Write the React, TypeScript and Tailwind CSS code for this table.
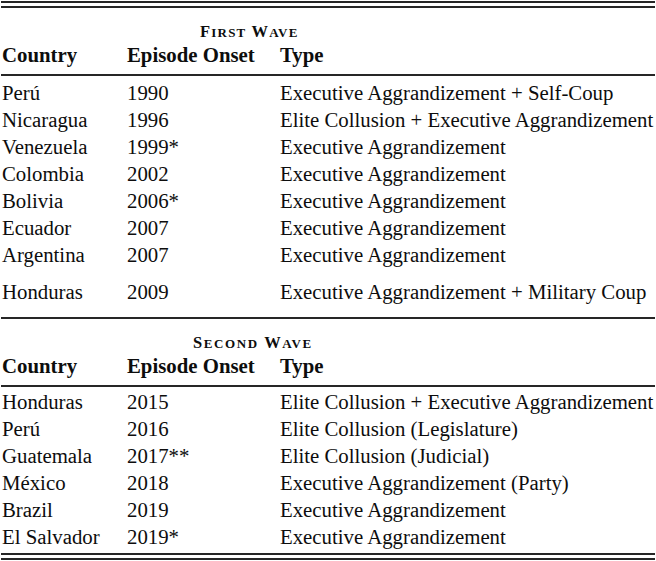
import React from "react";

type Row = [string, string, string];

const first: Row[] = [
  ["Perú", "1990", "Executive Aggrandizement + Self-Coup"],
  ["Nicaragua", "1996", "Elite Collusion + Executive Aggrandizement"],
  ["Venezuela", "1999*", "Executive Aggrandizement"],
  ["Colombia", "2002", "Executive Aggrandizement"],
  ["Bolivia", "2006*", "Executive Aggrandizement"],
  ["Ecuador", "2007", "Executive Aggrandizement"],
  ["Argentina", "2007", "Executive Aggrandizement"],
];

const second: Row[] = [
  ["Honduras", "2015", "Elite Collusion + Executive Aggrandizement"],
  ["Perú", "2016", "Elite Collusion (Legislature)"],
  ["Guatemala", "2017**", "Elite Collusion (Judicial)"],
  ["México", "2018", "Executive Aggrandizement (Party)"],
  ["Brazil", "2019", "Executive Aggrandizement"],
  ["El Salvador", "2019*", "Executive Aggrandizement"],
];

function DataRow({ r, extra = "" }: { r: Row; extra?: string }) {
  return (
    <div className={`grid grid-cols-[125px_153px_1fr] h-[27px] leading-[27px] whitespace-nowrap ${extra}`}>
      <div>{r[0]}</div>
      <div>{r[1]}</div>
      <div>{r[2]}</div>
    </div>
  );
}

function Header() {
  return (
    <div className="grid grid-cols-[125px_153px_1fr] h-[32.5px] leading-[27px] font-bold mt-[1px] whitespace-nowrap">
      <div>Country</div>
      <div>Episode Onset</div>
      <div>Type</div>
    </div>
  );
}

function Rule() {
  return <div className="h-[2px] bg-[#262626]" />;
}

function SmallCapsTitle({ words, cls }: { words: [string, string][]; cls: string }) {
  return (
    <div className={`h-[32px] pt-[14.5px] text-[16.5px] leading-[18px] font-bold whitespace-nowrap ${cls}`}>
      {words.map(([big, small], i) => (
        <React.Fragment key={i}>
          {i > 0 && <span> </span>}
          <span>{big}</span>
          <span className="text-[13px]">{small}</span>
        </React.Fragment>
      ))}
    </div>
  );
}

export default function App() {
  return (
    <div
      className="w-[656px] h-[561px] bg-white text-[#0d0d0d] text-[20.8px] px-[1px] overflow-hidden"
      style={{ fontFamily: '"Liberation Serif", "Times New Roman", serif' }}
    >
      <div className="pt-[1px]">
        <Rule />
        <div className="h-[3px]" />
        <Rule />
      </div>

      <div className="pl-[1px]">
        <SmallCapsTitle words={[["F", "IRST"], ["W", "AVE"]]} cls="pl-[198px] tracking-[1.2px]" />
        <Header />
      </div>
      <Rule />
      <div className="pl-[1px] pt-[3.4px] pb-[12.6px]">
        {first.map((r, i) => (
          <DataRow key={i} r={r} />
        ))}
        <DataRow r={["Honduras", "2009", "Executive Aggrandizement + Military Coup"]} extra="mt-[10px]" />
      </div>
      <Rule />

      <div className="pl-[1px]">
        <SmallCapsTitle words={[["S", "ECOND"], ["W", "AVE"]]} cls="pl-[191px] tracking-[1.6px]" />
        <Header />
      </div>
      <Rule />
      <div className="pl-[1px] pt-[1.5px] pb-[2.5px]">
        {second.map((r, i) => (
          <DataRow key={i} r={r} />
        ))}
      </div>
      <div>
        <Rule />
        <div className="h-[3px]" />
        <Rule />
      </div>
    </div>
  );
}
